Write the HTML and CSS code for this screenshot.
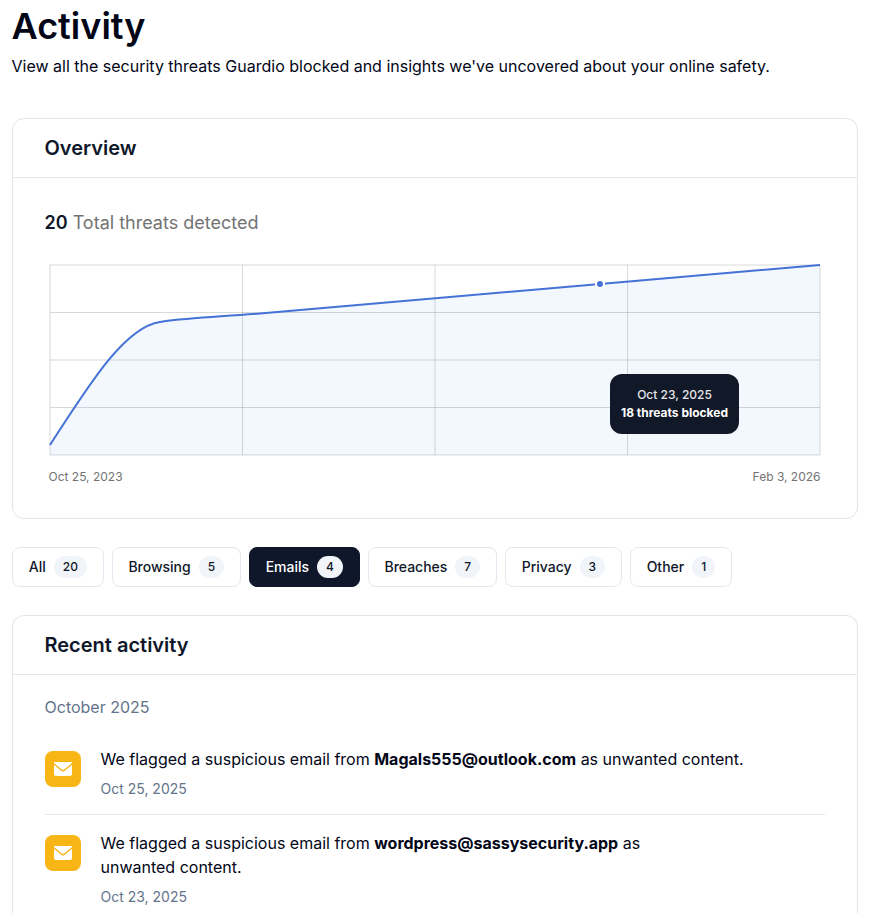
FILE: index.html
```html
<!DOCTYPE html>
<html lang="en">
<head>
  <meta charset="UTF-8">
  <title>Activity</title>
  <link rel="stylesheet" href="styles.css">
</head>
<body>

<main class="page">
  <header class="page-header">
    <h1>Activity</h1>
    <p>View all the security threats Guardio blocked and insights we've uncovered about your online safety.</p>
  </header>

  <section class="card overview">
    <h2 class="card-title">Overview</h2>
    <div class="overview-body">
      <p class="total"><strong>20</strong> Total threats detected</p>

      <div class="chart">
        <svg width="780" height="200" viewBox="0 0 780 200">
          <path class="area" d="M5 185 C45 123 80 67 115 62 C150 57 175 57 215 53.500 L555 24 L775 5 V195 H5 Z"/>
          <path class="grid" d="M5 5H775 M5 52.500H775 M5 100H775 M5 147.500H775 M5 195H775"/>
          <path class="grid" d="M5 5V195 M197.500 5V195 M390 5V195 M582.500 5V195 M775 5V195"/>
          <path class="line" d="M5 185 C45 123 80 67 115 62 C150 57 175 57 215 53.500 L555 24 L775 5"/>
          <circle class="point" cx="555" cy="24" r="4"/>
        </svg>
        <div class="tooltip">
          <span>Oct 23, 2025</span>
          <strong>18 threats blocked</strong>
        </div>
      </div>

      <div class="chart-dates">
        <span>Oct 25, 2023</span>
        <span>Feb 3, 2026</span>
      </div>
    </div>
  </section>

  <nav class="filters">
    <button class="filter">All <span class="count">20</span></button>
    <button class="filter">Browsing <span class="count">5</span></button>
    <button class="filter active">Emails <span class="count">4</span></button>
    <button class="filter">Breaches <span class="count">7</span></button>
    <button class="filter">Privacy <span class="count">3</span></button>
    <button class="filter">Other <span class="count">1</span></button>
  </nav>

  <section class="card recent">
    <h2 class="card-title">Recent activity</h2>
    <div class="recent-body">
      <h3 class="month">October 2025</h3>

      <article class="event">
        <div class="event-icon">
          <svg width="18" height="14" viewBox="0 0 18 14">
            <path d="M0 0H18V1L10.500 7.200Q9 8.400 7.500 7.200L0 1Z"/>
            <path d="M0 2.800L6.800 8.600Q9 10.300 11.200 8.600L18 2.800V12Q18 14 16 14H2Q0 14 0 12Z"/>
          </svg>
        </div>
        <div class="event-text">
          <p>We flagged a suspicious email from <strong>Magals555@outlook.com</strong> as unwanted&nbsp;content.</p>
          <time>Oct 25, 2025</time>
        </div>
      </article>

      <article class="event">
        <div class="event-icon">
          <svg width="18" height="14" viewBox="0 0 18 14">
            <path d="M0 0H18V1L10.500 7.200Q9 8.400 7.500 7.200L0 1Z"/>
            <path d="M0 2.800L6.800 8.600Q9 10.300 11.200 8.600L18 2.800V12Q18 14 16 14H2Q0 14 0 12Z"/>
          </svg>
        </div>
        <div class="event-text">
          <p>We flagged a suspicious email from <strong>wordpress@sassysecurity.app</strong> as unwanted&nbsp;content.</p>
          <time>Oct 23, 2025</time>
        </div>
      </article>
    </div>
  </section>
</main>

</body>
</html>
```
FILE: styles.css
```css
* {
  box-sizing: border-box;
}

body {
  margin: 0;
  background: #fff;
  color: #020617;
  font-family: Inter, sans-serif;
  font-size: 16px;
  line-height: 24px;
}

h1, h2, h3, p {
  margin: 0;
}

.page {
  padding: 6px 12px 0;
}

.page-header {
  margin-bottom: 40px;
  margin-left: -0.5px;
}

.page-header h1 {
  font-size: 36px;
  line-height: 40px;
  font-weight: 600;
  margin-bottom: 8px;
}

.card {
  border: 1px solid #e5e5e5;
  border-radius: 12px;
}

.card-title {
  height: 59px;
  padding: 0 31.5px;
  border-bottom: 1px solid #e5e5e5;
  color: #0f172a;
  font-size: 20px;
  line-height: 58px;
  font-weight: 600;
}

.overview {
  height: 401px;
}

.overview-body {
  padding: 31px 32px 0;
}

.total {
  margin: 0 0 23px -0.5px;
  color: #737373;
  font-size: 18px;
  line-height: 28px;
}

.total strong {
  color: #0f172a;
  font-weight: 600;
}

.chart {
  position: relative;
  height: 200px;
}

.chart svg {
  display: block;
}

.area {
  fill: #f3f7fe;
}

.grid {
  fill: none;
  stroke: #000;
  stroke-opacity: 0.15;
}

.line {
  fill: none;
  stroke: #4472d5;
  stroke-width: 2;
}

.point {
  fill: #4472d5;
  stroke: #fff;
  stroke-width: 2;
}

.tooltip {
  position: absolute;
  left: 565px;
  top: 114px;
  width: 129px;
  height: 60px;
  padding-top: 12px;
  display: flex;
  flex-direction: column;
  align-items: center;
  background: #111827;
  border-radius: 12px;
  color: #e5e7eb;
  font-size: 12px;
  line-height: 18px;
  font-weight: 500;
}

.tooltip strong {
  color: #fff;
  font-weight: 700;
}

.chart-dates {
  display: flex;
  justify-content: space-between;
  padding: 9px 4.5px 0 3.5px;
  color: #737373;
  font-size: 12px;
  line-height: 16px;
}

.filters {
  display: flex;
  gap: 8px;
  margin: 28px 0;
}

.filter {
  display: flex;
  align-items: center;
  gap: 8px;
  height: 40px;
  padding: 0 15.75px;
  border: 1px solid #e2e8f0;
  border-radius: 8px;
  background: #fff;
  color: #0f172a;
  font-family: inherit;
  font-size: 14px;
  line-height: 20px;
  font-weight: 500;
  cursor: pointer;
}

.filter.active {
  background: #0f172a;
  border-color: #0f172a;
  color: #fff;
}

.count {
  padding: 1px 9px;
  border-radius: 11px;
  background: #f1f5f9;
  color: #0f172a;
  font-size: 12px;
}

.recent {
  height: 298px;
  border-bottom: 0;
  border-radius: 12px 12px 0 0;
}

.recent-body {
  padding: 20px 32px 0;
}

.month {
  margin: 0 0 12px -0.5px;
  color: #64748b;
  font-size: 16px;
  font-weight: 400;
}

.event {
  display: flex;
  gap: 19.5px;
  padding: 16px 0 15px;
  border-bottom: 1px solid #e2e8f0;
}

.event:last-child {
  padding-bottom: 0;
  border-bottom: 0;
}

.event-icon {
  display: flex;
  flex: none;
  align-items: center;
  justify-content: center;
  width: 36px;
  height: 36px;
  margin-top: 4px;
  border-radius: 8px;
  background: #f8b616;
}

.event-icon svg {
  fill: #fff;
}

.event-text {
  max-width: 660px;
}

.event-text strong {
  font-weight: 700;
}

.event-text time {
  display: block;
  margin-top: 8px;
  color: #64748b;
  font-size: 14px;
  line-height: 20px;
}
```
